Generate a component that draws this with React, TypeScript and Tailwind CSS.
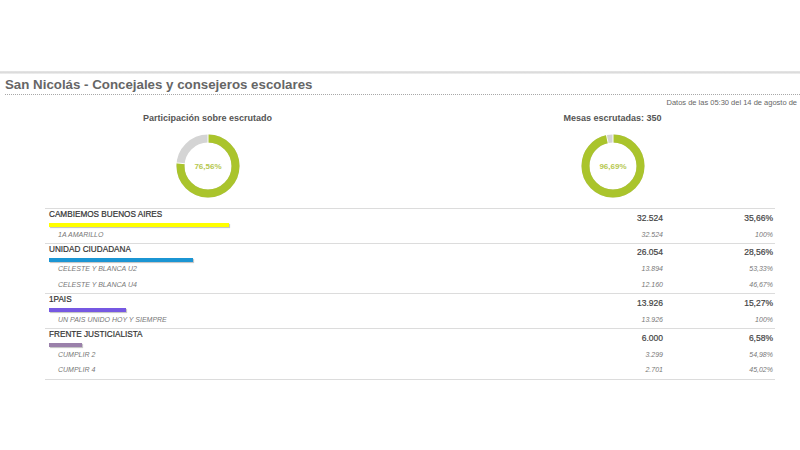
import React from "react";

type Sub = { name: string; votes: string; pct: string };
type Party = { name: string; votes: string; pct: string; value: number; color: string; subs: Sub[] };

const parties: Party[] = [
  {
    name: "CAMBIEMOS BUENOS AIRES",
    votes: "32.524",
    pct: "35,66%",
    value: 35.66,
    color: "#ffff00",
    subs: [{ name: "1A AMARILLO", votes: "32.524", pct: "100%" }],
  },
  {
    name: "UNIDAD CIUDADANA",
    votes: "26.054",
    pct: "28,56%",
    value: 28.56,
    color: "#1b95d3",
    subs: [
      { name: "CELESTE Y BLANCA U2", votes: "13.894", pct: "53,33%" },
      { name: "CELESTE Y BLANCA U4", votes: "12.160", pct: "46,67%" },
    ],
  },
  {
    name: "1PAIS",
    votes: "13.926",
    pct: "15,27%",
    value: 15.27,
    color: "#7658e2",
    subs: [{ name: "UN PAIS UNIDO HOY Y SIEMPRE", votes: "13.926", pct: "100%" }],
  },
  {
    name: "FRENTE JUSTICIALISTA",
    votes: "6.000",
    pct: "6,58%",
    value: 6.58,
    color: "#9a80aa",
    subs: [
      { name: "CUMPLIR 2", votes: "3.299", pct: "54,98%" },
      { name: "CUMPLIR 4", votes: "2.701", pct: "45,02%" },
    ],
  },
];

function Donut({ value, label }: { value: number; label: string }) {
  const r = 27.5;
  const c = 2 * Math.PI * r;
  const g = (c * value) / 100;
  const a = (value / 100) * 2 * Math.PI;
  const x1 = 32 + 23 * Math.sin(a);
  const y1 = 32 - 23 * Math.cos(a);
  const x2 = 32 + 32 * Math.sin(a);
  const y2 = 32 - 32 * Math.cos(a);
  return (
    <svg width="64" height="64" viewBox="0 0 64 64">
      <g transform="rotate(-90 32 32)">
        <circle cx="32" cy="32" r={r} fill="none" stroke="#d4d4d4" strokeWidth="8" />
        <circle
          cx="32"
          cy="32"
          r={r}
          fill="none"
          stroke="#aac42c"
          strokeWidth="8"
          strokeDasharray={`${g} ${c}`}
        />
      </g>
      <line x1="32" y1="0" x2="32" y2="9" stroke="#fff" strokeWidth="1" />
      <line x1={x1} y1={y1} x2={x2} y2={y2} stroke="#fff" strokeWidth="1" />
      <text
        x="32"
        y="35"
        textAnchor="middle"
        fontSize="8"
        fontWeight="bold"
        fill="#b6c84f"
        fontFamily="'Liberation Sans', Arial, sans-serif"
      >
        {label}
      </text>
    </svg>
  );
}

export default function App() {
  return (
    <div
      className="w-[800px] h-[450px] overflow-hidden bg-white"
      style={{ fontFamily: "'Liberation Sans', Arial, sans-serif" }}
    >
      <div className="h-[71px]" />
      <div className="h-[3px] bg-gradient-to-b from-[#e6e6e6] via-[#dcdcdc] to-[#f2f2f2]" />
      <div className="ml-[5px] w-[810px]">
        <div className="mt-[3px] pb-[1px] border-b border-dotted border-[#a8a8a8] w-[795px]">
          <div className="text-[13.3px] leading-[16px] font-bold text-[#666]">
            San Nicolás - Concejales y consejeros escolares
          </div>
        </div>
        <div className="mt-[3px] mr-[18px] text-right text-[7.5px] leading-[10px] text-[#666] whitespace-nowrap">
          Datos de las 05:30 del 14 de agosto de
        </div>
        <div className="grid grid-cols-2 mt-[5px]">
          <div className="flex flex-col items-center">
            <div className="text-[9px] leading-[11px] font-bold text-[#555]">Participación sobre escrutado</div>
            <div className="mt-[10px]">
              <Donut value={76.56} label="76,56%" />
            </div>
          </div>
          <div className="flex flex-col items-center">
            <div className="text-[9px] leading-[11px] font-bold text-[#555]">Mesas escrutadas: 350</div>
            <div className="mt-[10px]">
              <Donut value={96.69} label="96,69%" />
            </div>
          </div>
        </div>
        <div className="mx-10 mt-[10px] border-t border-[#dcdcdc]">
          {parties.map((p) => (
            <div key={p.name} className="border-b border-[#dcdcdc]">
              <div className="grid grid-cols-[1fr_110px_112px] h-[18px]">
                <div className="pl-[4px] pt-[1px]">
                  <div className="text-[8.2px] leading-[10px] text-[#333] whitespace-nowrap [-webkit-text-stroke:0.2px_#333]">
                    {p.name}
                  </div>
                  <div
                    className="mt-[3px] h-[4px] shadow-[1px_1px_1px_rgba(0,0,0,0.25)]"
                    style={{ width: `${p.value}%`, backgroundColor: p.color }}
                  />
                </div>
                <div className="flex items-center justify-end text-[8.5px] text-[#444] [-webkit-text-stroke:0.2px_#444]">
                  {p.votes}
                </div>
                <div className="flex items-center justify-end pr-[2px] text-[8.5px] text-[#444] [-webkit-text-stroke:0.2px_#444]">
                  {p.pct}
                </div>
              </div>
              {p.subs.map((s) => (
                <div key={s.name} className="grid grid-cols-[1fr_110px_112px] h-[15.75px] items-center italic text-[#777]">
                  <div className="pl-[13px] text-[7px] whitespace-nowrap">{s.name}</div>
                  <div className="text-right text-[7px]">{s.votes}</div>
                  <div className="text-right pr-[2px] text-[7px]">{s.pct}</div>
                </div>
              ))}
            </div>
          ))}
        </div>
      </div>
    </div>
  );
}
